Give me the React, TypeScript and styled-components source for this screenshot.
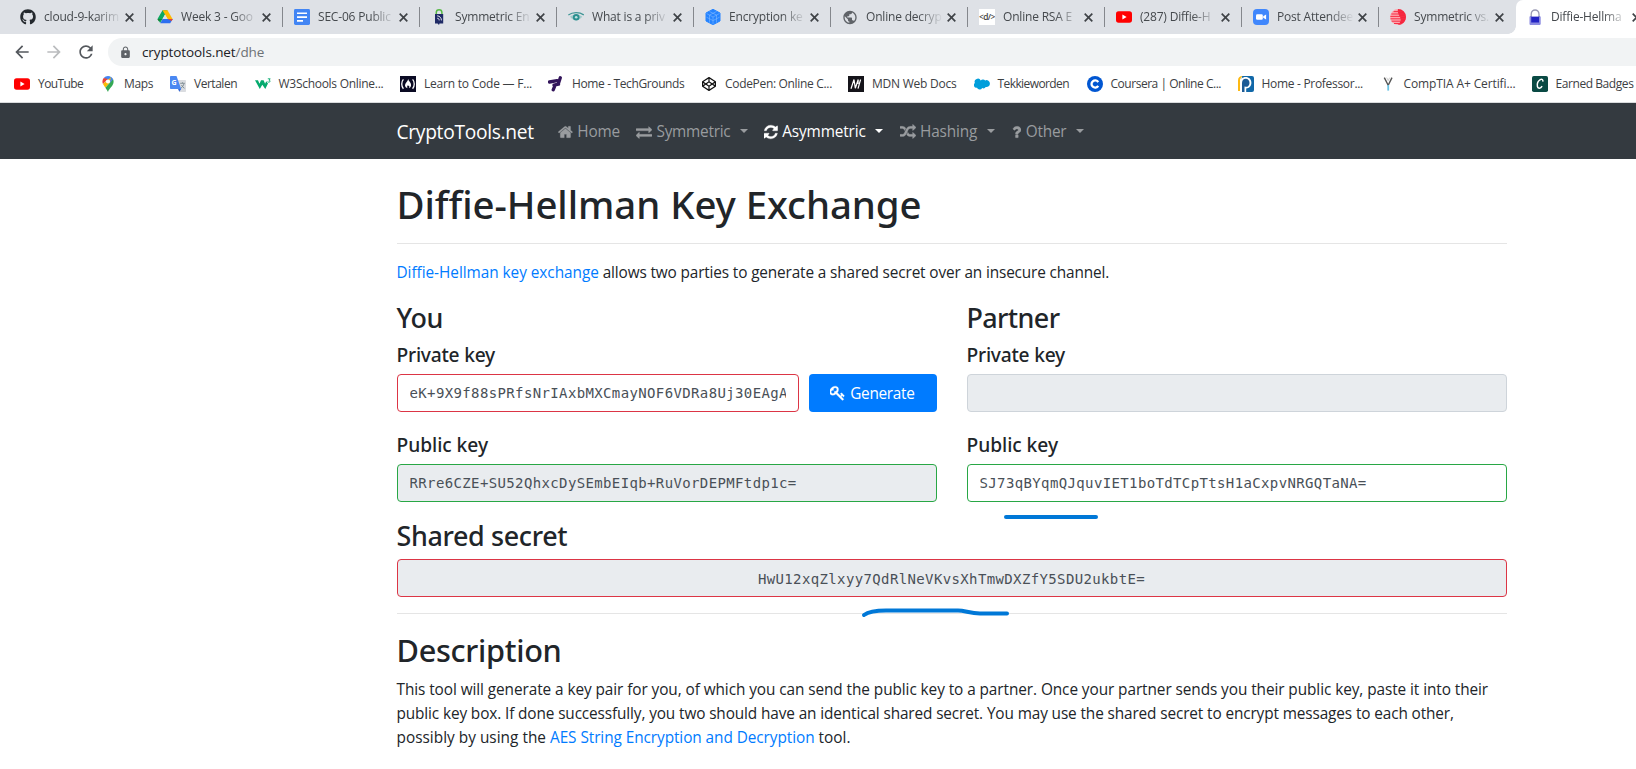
import React from "react";
import styled, { createGlobalStyle } from "styled-components";
import { FaGithub, FaCodepen } from "react-icons/fa";
import { MdArrowBack, MdArrowForward, MdRefresh, MdLock, MdPublic } from "react-icons/md";

const sans = `"Open Sans", "Noto Sans", sans-serif`;
const heading = `"Noto Sans", "Open Sans", sans-serif`;

const GlobalStyle = createGlobalStyle`
  * { box-sizing: border-box; }
  html, body { margin: 0; padding: 0; background: #fff; overflow: hidden; }
  body { font-family: ${sans}; color: #212529; }
`;

/* ---------- browser chrome ---------- */

const Window = styled.div`
  width: 100vw;
  height: 100vh;
  overflow: hidden;
  background: #fff;
`;

const TabStrip = styled.div`
  display: flex;
  height: 34px;
  padding-left: 9px;
  background: #dee1e6;
  overflow: hidden;
`;

const Tab = styled.div<{ $active?: boolean; $last?: boolean }>`
  position: relative;
  flex: none;
  display: flex;
  align-items: center;
  width: 137px;
  height: 34px;
  padding-left: 11px;
  background: ${(p) => (p.$active ? "#fff" : "transparent")};
  border-top-left-radius: ${(p) => (p.$active ? "7px" : "0")};

  &::after {
    content: "";
    display: ${(p) => (p.$active || p.$last ? "none" : "block")};
    position: absolute;
    right: 0;
    top: 7px;
    width: 1px;
    height: 20px;
    background: #84878c;
  }
  &::before {
    content: "";
    display: ${(p) => (p.$active ? "block" : "none")};
    position: absolute;
    left: -8px;
    bottom: 0;
    width: 8px;
    height: 8px;
    background: radial-gradient(circle at 0 0, transparent 7.5px, #fff 8px);
  }
`;

const Favicon = styled.span`
  flex: none;
  display: flex;
  align-items: center;
  justify-content: center;
  width: 16px;
  height: 16px;
  svg { display: block; }
`;

const TabTitle = styled.span`
  width: 78px;
  margin-left: 8px;
  white-space: nowrap;
  font-size: 12px;
  line-height: 16px;
  letter-spacing: -0.19px;
  color: #45494d;
  mask-image: linear-gradient(to right, #000 52px, transparent 77px);
`;

const TabClose = styled.svg`
  flex: none;
  margin-left: 3px;
`;

const Toolbar = styled.div`
  display: flex;
  align-items: center;
  height: 36px;
  padding-left: 12px;
  color: #5f6368;
`;

const ToolButton = styled.span<{ $dim?: boolean }>`
  flex: none;
  width: 20px;
  height: 20px;
  margin-right: 12px;
  color: ${(p) => (p.$dim ? "#babcbe" : "#54585d")};
  svg { display: block; }
`;

const Omnibox = styled.div`
  flex: 1;
  display: flex;
  align-items: center;
  height: 28px;
  padding-left: 11px;
  border-radius: 14px 0 0 14px;
  background: #f1f3f4;
`;

const Url = styled.span`
  margin-left: 10px;
  font-size: 13.5px;
  line-height: 20px;
  letter-spacing: -0.1px;
  color: #202124;
  span { color: #6d7175; }
`;

const Bookmarks = styled.div`
  display: flex;
  align-items: center;
  height: 33px;
  padding: 0 0 4px 14px;
  border-bottom: 1px solid #d9dbdd;
  overflow: hidden;
`;

const Bookmark = styled.span<{ $w: number }>`
  flex: none;
  display: flex;
  align-items: center;
  gap: 8px;
  width: ${(p) => p.$w}px;
`;

const BookmarkLabel = styled.span<{ $ls: number }>`
  font-size: 12px;
  line-height: 16px;
  white-space: nowrap;
  color: #3c4043;
  letter-spacing: ${(p) => p.$ls}px;
`;

/* ---------- site ---------- */

const Navbar = styled.nav`
  display: flex;
  align-items: center;
  height: 56px;
  padding: 2px 0 0 396.5px;
  background: #343a40;
`;

const Brand = styled.span`
  width: 161.5px;
  font-size: 19.2px;
  line-height: 30px;
  letter-spacing: -0.29px;
  color: #fff;
`;

const NavItem = styled.span<{ $w: number; $active?: boolean; $ls: number }>`
  display: flex;
  align-items: center;
  width: ${(p) => p.$w}px;
  font-size: 15.36px;
  line-height: 24px;
  letter-spacing: ${(p) => p.$ls}px;
  color: ${(p) => (p.$active ? "#fff" : "#999c9f")};
  svg { flex: none; margin-right: 4.5px; }
`;

const Caret = styled.i`
  margin: 0 0 3px 9.5px;
  border-top: 4.8px solid currentColor;
  border-left: 4.8px solid transparent;
  border-right: 4.8px solid transparent;
`;

const Main = styled.main`
  position: relative;
  width: 1110px;
  margin-left: 396.5px;
  padding-top: 21px;
`;

const H1 = styled.h1`
  margin: 0 0 -1px;
  font: 500 38.4px/48px ${heading};
  letter-spacing: -0.05px;
`;

const H2 = styled.h2`
  margin: 0 0 7px;
  padding-top: 1px;
  font: 500 30.7px/38.4px ${heading};
  letter-spacing: -0.3px;
`;

const H3 = styled.h3<{ $ls?: number }>`
  margin: 0 0 7px;
  padding-top: 1px;
  font: 500 26.9px/33.6px ${heading};
  letter-spacing: ${(p) => p.$ls ?? -0.35}px;
`;

const H5 = styled.h5<{ $ls: number }>`
  margin: 0 0 7px;
  padding-top: 1px;
  font: 500 19.2px/24px ${heading};
  letter-spacing: ${(p) => p.$ls}px;
`;

const Rule = styled.hr`
  margin: 16px 0;
  border: 0;
  border-top: 1px solid rgba(0, 0, 0, 0.1);
`;

const Paragraph = styled.p`
  margin: 0 0 15px;
  padding-top: 1px;
  font-size: 15.36px;
  line-height: 24px;
`;

const Line = styled.span<{ $ls: number }>`
  display: block;
  white-space: nowrap;
  letter-spacing: ${(p) => p.$ls}px;
`;

const Link = styled.a<{ $ls?: number }>`
  color: #007bff;
  letter-spacing: ${(p) => p.$ls ?? -0.04}px;
`;

const Columns = styled.div`
  display: grid;
  grid-template-columns: 540px 540px;
  column-gap: 30px;
`;

const Group = styled.div<{ $gap: number }>`
  margin-bottom: ${(p) => p.$gap}px;
`;

const InputRow = styled.div`
  display: flex;
  gap: 10px;
`;

const borders = { invalid: "#dc3545", valid: "#28a745", plain: "#ced4da" };

const Input = styled.input<{ $state: keyof typeof borders; $center?: boolean }>`
  display: block;
  flex: 1;
  width: 100%;
  min-width: 0;
  height: 38px;
  padding: ${(p) => (p.$center ? "7px 12px 5px" : "6px 12px")};
  border: 1px solid ${(p) => borders[p.$state]};
  border-radius: 4px;
  background: ${(p) => (p.readOnly ? "#e9ecef" : "#fff")};
  color: #495057;
  font: 14px/24px "DejaVu Sans Mono", monospace;
  letter-spacing: 0.37px;
  text-align: ${(p) => (p.$center ? "center" : "left")};
  outline: none;
`;

const Button = styled.button`
  display: flex;
  align-items: center;
  justify-content: center;
  width: 128px;
  height: 38px;
  padding: 2px 0 0;
  border: 0;
  border-radius: 4px;
  background: #007bff;
  color: #fff;
  font: 400 15.36px/24px ${sans};
  letter-spacing: -0.3px;
  svg { margin: 0 5px 2px 0; }
`;

const PenStroke = styled.svg<{ $x: number; $y: number }>`
  position: absolute;
  left: ${(p) => p.$x}px;
  top: ${(p) => p.$y}px;
  overflow: visible;
  fill: none;
  stroke: #0078d7;
  stroke-width: 4;
  stroke-linecap: round;
  stroke-linejoin: round;
`;

/* ---------- icons ---------- */

const glyphs = {
  home: ["0 0 1664 1792", "M1408 992v480q0 26-19 45t-45 19h-384v-384h-256v384h-384q-26 0-45-19t-19-45v-480q0-1 .5-3t.5-3l575-474 575 474q1 2 1 6zm223-69l-62 74q-8 9-21 11h-3q-13 0-21-7l-692-577-692 577q-12 8-24 7-13-2-21-11l-62-74q-8-10-7-23.5t11-21.5l719-599q32-26 76-26t76 26l244 204v-195q0-14 9-23t23-9h192q14 0 23 9t9 23v408l219 182q10 8 11 21.5t-7 23.5z"],
  exchange: ["0 0 1792 1792", "M1792 1184v192q0 13-9.5 22.5t-22.5 9.5h-1376v192q0 13-9.5 22.5t-22.5 9.5q-12 0-24-10l-319-320q-9-9-9-22 0-14 9-23l320-320q9-9 23-9 13 0 22.5 9.5t9.5 22.5v192h1376q13 0 22.5 9.5t9.5 22.5zm0-544q0 14-9 23l-320 320q-9 9-23 9-13 0-22.5-9.5t-9.5-22.5v-192h-1376q-13 0-22.5-9.5t-9.5-22.5v-192q0-13 9.5-22.5t22.5-9.5h1376v-192q0-14 9-23t23-9q12 0 24 10l319 319q9 9 9 23z"],
  refresh: ["128 0 1536 1792", "M1639 1056q0 5-1 7-64 268-268 434.5t-478 166.5q-146 0-282.5-55t-243.5-157l-129 129q-19 19-45 19t-45-19-19-45v-448q0-26 19-45t45-19h448q26 0 45 19t19 45-19 45l-137 137q71 66 161 102t187 36q134 0 250-65t186-179q11-17 53-117 8-23 30-23h192q13 0 22.5 9.5t9.5 22.5zm25-800v448q0 26-19 45t-45 19h-448q-26 0-45-19t-19-45 19-45l138-138q-148-137-349-137-134 0-250 65t-186 179q-11 17-53 117-8 23-30 23h-199q-13 0-22.5-9.5t-9.5-22.5v-7q65-268 270-434.5t480-166.5q146 0 284 55.5t245 156.5l130-129q19-19 45-19t45 19 19 45z"],
  random: ["0 0 1792 1792", "M666 481q-60 92-137 273-22-45-37-72.5t-40.5-63.5-51-56.5-63-35-81.5-14.5h-224q-14 0-23-9t-9-23v-192q0-14 9-23t23-9h224q250 0 410 225zm1126 799q0 14-9 23l-320 320q-9 9-23 9-13 0-22.5-9.5t-9.5-22.5v-192q-32 0-85 .5t-81 1-73-1-71-5-64-10.5-63-18.5-58-28.5-59-40-55-53.5-56-69.5q59-93 136-273 22 45 37 72.5t40.5 63.5 51 56.5 63 35 81.5 14.5h256v-192q0-14 9-23t23-9q12 0 24 10l319 319q9 9 9 23zm0-896q0 14-9 23l-320 320q-9 9-23 9-13 0-22.5-9.5t-9.5-22.5v-192h-256q-48 0-87 15t-69 45-51 61.5-45 77.5q-32 62-78 171-29 66-49.5 111t-54 105-64 100-74 83-90 68.5-106.5 42-128 16.5h-224q-14 0-23-9t-9-23v-192q0-14 9-23t23-9h224q48 0 87-15t69-45 51-61.5 45-77.5q32-62 78-171 29-66 49.5-111t54-105 64-100 74-83 90-68.5 106.5-42 128-16.5h256v-192q0-14 9-23t23-9q12 0 24 10l319 319q9 9 9 23z"],
  question: ["386 0 1024 1792", "M1088 1256v240q0 16-12 28t-28 12h-240q-16 0-28-12t-12-28v-240q0-16 12-28t28-12h240q16 0 28 12t12 28zm316-600q0 54-15.5 101t-35 76.5-55 59.5-57.5 43.5-61 35.5q-41 23-68.5 65t-27.5 67q0 17-12 32.5t-28 15.5h-240q-15 0-25.5-18.5t-10.5-37.5v-45q0-83 65-156.5t143-108.5q59-27 84-56t25-76q0-42-46.5-74t-107.5-32q-65 0-108 29-35 25-107 115-13 16-31 16-12 0-25-8l-164-125q-13-10-15.5-25t5.5-28q160-266 464-266 80 0 161 31t146 83 106 127.5 41 158.5z"],
  key: ["64 0 1664 1792", "M832 512q0-80-56-136t-136-56-136 56-56 136q0 42 19 83-41-19-83-19-80 0-136 56t-56 136 56 136 136 56 136-56 56-136q0-42-19-83 41 19 83 19 80 0 136-56t56-136zm851 704q0 17-49 66t-66 49q-9 0-28.5-16t-36.5-33-38.5-40-24.5-26l-96 96 220 220q28 28 28 68 0 42-39 81t-81 39q-40 0-68-28l-671-671q-176 131-365 131-163 0-265.5-102.5t-102.5-265.5q0-160 95-313t248-248 313-95q163 0 265.5 102.5t102.5 265.5q0 189-131 365l355 355 96-96q-3-3-26-24.5t-40-38.5-33-36.5-16-28.5q0-17 49-66t66-49q13 0 23 10 6 6 46 44.5t82 79.5 86.5 86 73 78 28.5 41z"],
} as const;

const Glyph = ({ name }: { name: keyof typeof glyphs }) => {
  const [box, d] = glyphs[name];
  const width = (Number(box.split(" ")[2]) / 1792) * 16;
  return (
    <svg width={width} height="16" viewBox={box} fill="currentColor" stroke="currentColor" strokeWidth="30">
      <path d={d} />
    </svg>
  );
};

const Svg16 = ({ children }: { children: React.ReactNode }) => (
  <svg width="16" height="16" viewBox="0 0 16 16">{children}</svg>
);

const YouTubeIcon = () => (
  <Svg16>
    <rect y="2.3" width="16" height="11.4" rx="2.6" fill="#f00" />
    <path d="M6.4 5.6v4.8L10.6 8z" fill="#fff" />
  </Svg16>
);

const DriveIcon = () => (
  <Svg16>
    <path d="M5.5 1.3h5L8 5.6 3.2 14 .5 9.9z" fill="#0da960" />
    <path d="M5.5 1.3h5l5.2 9h-5z" fill="#ffba00" />
    <path d="M3.2 14.3l2.5-4.4h10.1l-2.6 4.4z" fill="#2d6ff0" />
    <path d="M8 5.6l2.6 4.3H5.6z" fill="#dee1e6" />
    <path d="M10.6 9.9h5.2l-1.3 2.2z" fill="#e94235" />
    <path d="M5.7 9.9H.4l1.4 2.3z" fill="#188038" />
  </Svg16>
);

const DocsIcon = () => (
  <Svg16>
    <rect width="16" height="16" rx="1.4" fill="#4285f4" />
    <path d="M3 3.5h10v1.6H3zM3 7.3h10v1.6H3zM3 11.1h6v1.6H3z" fill="#fff" />
  </Svg16>
);

const TagLockIcon = () => (
  <Svg16>
    <path d="M5.3 5V3.4a2.8 2.6 0 0 1 5.6 0V5" fill="none" stroke="#58b947" strokeWidth="1.5" />
    <path d="M4 5h8.2v9.4H8.5L8 16l-1.4-1.6H4z" fill="#1f2a66" />
    <path d="M6.2 6.8c2.600.3 4.200 2 4.200 4.600M6.2 9.200c1.300 0 2 .9 2 2.200" fill="none" stroke="#fff" strokeWidth=".9" />
  </Svg16>
);

const EyeIcon = () => (
  <Svg16>
    <path d="M.3 6C4.6 2.7 11.6 2.7 15.8 6" fill="none" stroke="#3f9696" strokeWidth="1.3" />
    <path d="M2 7.8c3.4-2.6 8.8-2.6 12.2 0-3.4 4.6-8.8 4.6-12.2 0z" fill="#9fcaca" />
    <circle cx="8.2" cy="8.2" r="3.3" fill="#2a8f8f" />
    <circle cx="8.2" cy="8.2" r="1.3" fill="#bfe0e0" />
  </Svg16>
);

const CubeIcon = () => (
  <Svg16>
    <path d="M8 .3l7 3.700v8L8 15.700 1 12V4z" fill="#2684ff" stroke="#2684ff" strokeLinejoin="round" />
    <path d="M1.5 4.5L8 8l6.5-3.5M8 8v7.5M4.5 2.5L11.5 6v7.5M11.5 2.500L4.500 6v7.500M1.500 8.200L8 11.600l6.500-3.400" fill="none" stroke="#8fc0ff" strokeWidth=".5" />
  </Svg16>
);

const CodeTagIcon = () => (
  <Svg16>
    <rect width="16" height="16" fill="#fff" />
    <text x="7.8" y="10.8" textAnchor="middle" fontFamily="Open Sans, sans-serif" fontSize="8.4" fontWeight="600" letterSpacing="-.6" fill="#444">&lt;d/&gt;</text>
  </Svg16>
);

const ZoomIcon = () => (
  <Svg16>
    <rect width="16" height="16" rx="4" fill="#4087fc" />
    <rect x="3" y="5.2" width="6.8" height="5.6" rx="1.3" fill="#fff" />
    <path d="M10.2 7.300l2.900-1.900v5.200l-2.900-1.900z" fill="#fff" />
  </Svg16>
);

const SphereIcon = () => (
  <Svg16>
    <circle cx="8" cy="8" r="7.9" fill="#fca5ad" />
    <path d="M8 0a8 8 0 0 1 0 16c3-3 3.400-5.500 2-8C8.800 5.600 7 3 8 0z" fill="#f5253d" />
    <path d="M3.600 2.600h8.800M1.400 5h13.200M.4 7.400h15.200M.5 9.800h15M1.600 12.200h12.800M4 14.500h8" stroke="#f72f46" strokeWidth="1" />
  </Svg16>
);

const BluePadlockIcon = () => (
  <Svg16>
    <path d="M4.200 8V5.200c0-5.600 7.800-5.600 7.800 0V8" fill="none" stroke="#9a9ab4" strokeWidth="1.300" />
    <path d="M2.800 7.600h10.500v7.600H2.800z" fill="#2424c4" />
    <path d="M2.800 7.600h1.400V16H2.800zM12 7.600h1.300V16H12zM2.800 13.600h10.500V16H2.800z" fill="#8a8ae0" />
  </Svg16>
);

const MapsIcon = () => (
  <Svg16>
    <path d="M8 0a5.600 5.600 0 0 0-4.300 2L8 5.600l3.300-4.400A5.600 5.600 0 0 0 8 0z" fill="#4285f4" />
    <path d="M3.700 2a5.500 5.500 0 0 0-1.300 3.600c0 1 .2 1.800.6 2.500L8 3z" fill="#ea4335" />
    <path d="M3 8.100c.6 1.300 1.500 2.300 2.400 3.600L13 3.200l-2-2z" fill="#fbbc04" />
    <path d="M5.400 11.700C6.600 13.300 7.300 14.600 8 16c1-3.600 5.600-5.700 5.600-10.400 0-1-.2-1.800-.6-2.600z" fill="#34a853" />
    <path d="M11 .9c1 .6 1.700 1.400 2.100 2.400L9.700 7z" fill="#4285f4" />
    <circle cx="8" cy="5.500" r="2.100" fill="#fff" />
  </Svg16>
);

const TranslateIcon = () => (
  <Svg16>
    <path d="M6 4h9.200c.5 0 .8.300.8.800v10.400c0 .5-.3.800-.8.800H9.500z" fill="#dadce0" />
    <path d="M.8 0h5.700l4.700 13H.8C.3 13 0 12.700 0 12.200V.8C0 .3.300 0 .8 0z" fill="#4a88f2" />
    <path d="M8 13h3.200l-1.900 2.800z" fill="#3367d6" />
    <text x="1.500" y="8.800" fontFamily="Open Sans, sans-serif" fontSize="7" fontWeight="700" fill="#fff">G</text>
    <path d="M10.200 7.300h4.600M12.500 6.300v1M14 7.500c-.4 2-1.600 3.600-3 4.600M11.500 9c.6 1.500 1.700 2.500 3 3.300" fill="none" stroke="#7b8a91" strokeWidth=".9" />
  </Svg16>
);

const W3Icon = () => (
  <Svg16>
    <path d="M0 4.300h3l1.500 3.500L6 4.300h2.600l1.500 3.500 1.100-2.500L13 7.500 10.300 13 7.300 8.800 4.800 13z" fill="#04aa6d" />
    <path d="M12.800 2.800h2.400L14 4.200c1.500 0 1.500 2-.1 2-.7 0-1.100-.3-1.300-.6" fill="none" stroke="#04aa6d" strokeWidth=".9" />
  </Svg16>
);

const FreeCodeCampIcon = () => (
  <Svg16>
    <rect width="16" height="16" fill="#0a0a23" />
    <path d="M3.400 3.400c-2.200 2.400-2.200 7 0 9.400M12.600 3.400c2.200 2.400 2.200 7 0 9.400" fill="none" stroke="#fff" strokeWidth="1.300" />
    <path d="M8.200 3c.2 2 2.900 3.400 2.900 6 0 1.600-.9 2.800-2.200 3.300.5-.9.700-1.700.1-2.600-.5.500-.8.300-.9-.6-.9.9-1.300 2.200-.5 3.200C6.100 11.800 5 10.700 5 9.200 5 7 7.800 5.600 8.200 3z" fill="#fff" />
  </Svg16>
);

const TechGroundsIcon = () => (
  <Svg16>
    <path d="M1.500 6l7.500-1.300M6 9.200l4.500-1M12.300 1.800L10.600 7M7 9.400L5.200 13.800" fill="none" stroke="#32145a" strokeWidth="3.300" strokeLinecap="round" />
  </Svg16>
);

const MdnIcon = () => (
  <Svg16>
    <rect width="16" height="16" fill="#15141a" />
    <path d="M3 12.700L6 3.500 7.300 12.200 10.200 3.500M10 12.700l2.600-9.200M10.200 3.500L10 8" fill="none" stroke="#fff" strokeWidth="1.200" />
  </Svg16>
);

const CloudIcon = () => (
  <Svg16>
    <path d="M6.700 3.800a3 3 0 0 1 4.500-.2 3.400 3.400 0 0 1 4.700 3.200 3.400 3.400 0 0 1-4.200 3.400 2.600 2.600 0 0 1-3.500 1 2.900 2.900 0 0 1-5.200-.2A2.700 2.700 0 0 1 .9 6.200a3 3 0 0 1 5.800-2.400z" transform="translate(0 .8)" fill="#009edb" />
  </Svg16>
);

const CourseraIcon = () => (
  <Svg16>
    <circle cx="8" cy="8" r="8" fill="#0056d2" />
    <path d="M11.200 6.100a3.600 3.600 0 1 0 0 3.800" fill="none" stroke="#fff" strokeWidth="2.300" />
  </Svg16>
);

const ProfessorIcon = () => (
  <Svg16>
    <path d="M4 0h10a2 2 0 0 1 2 2v12a2 2 0 0 1-2 2H2z" fill="#1168a8" />
    <path d="M4.500 0C1.500 0 0 1.500 0 4.500V15h2V5c0-2 .8-3.300 2.500-5z" fill="#fdb913" />
    <path d="M2 16V7c0-4 2.500-6 5.700-6C11 1 13.400 3.400 13.400 6.800c0 3.200-2.200 5.600-5.200 5.600V16z" fill="#fff" />
    <path d="M4 16V7c0-2.700 1.600-4.200 3.800-4.200S11.500 4.500 11.500 6.900 10 10.800 8 10.800l-1.500-.3V16z" fill="#1c5b96" />
  </Svg16>
);

const CompTiaIcon = () => (
  <Svg16>
    <path d="M4.300 1.600L8.200 9.200 12 1.600" fill="none" stroke="#555" strokeWidth="1.400" />
    <path d="M6.700 1.600l1.500 3 1.500-3" fill="none" stroke="#bbb" strokeWidth=".7" />
    <path d="M8.200 9v5.600" stroke="#6cc3e4" strokeWidth="1.800" />
  </Svg16>
);

const BadgeIcon = () => (
  <Svg16>
    <rect width="16" height="16" rx="1.800" fill="#0a4a44" />
    <path d="M10.800 5.600c.5-2-.9-2.900-2.500-2-2.200 1.300-3.300 4.400-2.900 6.800.4 2.600 3.300 2.200 4.700-.3" fill="none" stroke="#fff" strokeWidth="1.500" />
  </Svg16>
);

/* ---------- data ---------- */

const tabs: { title: string; icon: React.ReactNode }[] = [
  { title: "cloud-9-karim", icon: <FaGithub size={16} color="#24292e" /> },
  { title: "Week 3 - Goo", icon: <DriveIcon /> },
  { title: "SEC-06 Public", icon: <DocsIcon /> },
  { title: "Symmetric En", icon: <TagLockIcon /> },
  { title: "What is a priv", icon: <EyeIcon /> },
  { title: "Encryption ke", icon: <CubeIcon /> },
  { title: "Online decryp", icon: <MdPublic size={17} color="#5f6368" /> },
  { title: "Online RSA E", icon: <CodeTagIcon /> },
  { title: "(287) Diffie-H", icon: <YouTubeIcon /> },
  { title: "Post Attendee", icon: <ZoomIcon /> },
  { title: "Symmetric vs.", icon: <SphereIcon /> },
  { title: "Diffie-Hellma", icon: <BluePadlockIcon /> },
];

const bookmarks: { label: string; icon: React.ReactNode; w: number; ls: number }[] = [
  { label: "YouTube", icon: <YouTubeIcon />, w: 86, ls: -0.58 },
  { label: "Maps", icon: <MapsIcon />, w: 70, ls: -0.38 },
  { label: "Vertalen", icon: <TranslateIcon />, w: 84.5, ls: -0.48 },
  { label: "W3Schools Online...", icon: <W3Icon />, w: 145.5, ls: -0.28 },
  { label: "Learn to Code — F...", icon: <FreeCodeCampIcon />, w: 148, ls: -0.22 },
  { label: "Home - TechGrounds", icon: <TechGroundsIcon />, w: 153, ls: -0.37 },
  { label: "CodePen: Online C...", icon: <FaCodepen size={14} color="#111" />, w: 147, ls: -0.32 },
  { label: "MDN Web Docs", icon: <MdnIcon />, w: 125.5, ls: -0.24 },
  { label: "Tekkieworden", icon: <CloudIcon />, w: 113, ls: -0.59 },
  { label: "Coursera | Online C...", icon: <CourseraIcon />, w: 151, ls: -0.47 },
  { label: "Home - Professor...", icon: <ProfessorIcon />, w: 142, ls: -0.3 },
  { label: "CompTIA A+ Certifi...", icon: <CompTiaIcon />, w: 152, ls: -0.12 },
  { label: "Earned Badges", icon: <BadgeIcon />, w: 120, ls: -0.43 },
];

const navItems: { label: string; icon: keyof typeof glyphs; w: number; ls: number; menu?: boolean; active?: boolean }[] = [
  { label: "Home", icon: "home", w: 78, ls: -0.25 },
  { label: "Symmetric", icon: "exchange", w: 128, ls: -0.25, menu: true },
  { label: "Asymmetric", icon: "refresh", w: 135.5, ls: -0.13, menu: true, active: true },
  { label: "Hashing", icon: "random", w: 112.5, ls: -0.13, menu: true },
  { label: "Other", icon: "question", w: 90, ls: -0.2, menu: true },
];

export default function App() {
  return (
    <Window>
      <GlobalStyle />
      <TabStrip>
        {tabs.map((t, i) => (
          <Tab key={t.title} $active={i === 11} $last={i === 10}>
            <Favicon>{t.icon}</Favicon>
            <TabTitle>{t.title}</TabTitle>
            <TabClose width="9" height="9" viewBox="0 0 9 9" stroke="#3f4347" strokeWidth="1.7">
              <path d="M.7.7l7.600 7.600M8.300.7L.7 8.300" />
            </TabClose>
          </Tab>
        ))}
      </TabStrip>
      <Toolbar>
        <ToolButton><MdArrowBack size={20} /></ToolButton>
        <ToolButton $dim><MdArrowForward size={20} /></ToolButton>
        <ToolButton><MdRefresh size={20} /></ToolButton>
        <Omnibox>
          <MdLock size={13} />
          <Url>cryptotools.net<span>/dhe</span></Url>
        </Omnibox>
      </Toolbar>
      <Bookmarks>
        {bookmarks.map((b) => (
          <Bookmark key={b.label} $w={b.w}>
            <Favicon>{b.icon}</Favicon>
            <BookmarkLabel $ls={b.ls}>{b.label}</BookmarkLabel>
          </Bookmark>
        ))}
      </Bookmarks>
      <Navbar>
        <Brand>CryptoTools.net</Brand>
        {navItems.map((n) => (
          <NavItem key={n.label} $w={n.w} $ls={n.ls} $active={n.active}>
            <Glyph name={n.icon} />
            {n.label}
            {n.menu && <Caret />}
          </NavItem>
        ))}
      </Navbar>
      <Main>
        <H1>Diffie-Hellman Key Exchange</H1>
        <Rule />
        <Paragraph>
          <Line $ls={-0.14}>
            <Link>Diffie-Hellman key exchange</Link> allows two parties to generate a shared secret over an insecure channel.
          </Line>
        </Paragraph>
        <Columns>
          <section>
            <H3>You</H3>
            <Group $gap={20}>
              <H5 $ls={-0.22}>Private key</H5>
              <InputRow>
                <Input $state="invalid" defaultValue="eK+9X9f88sPRfsNrIAxbMXCmayNOF6VDRa8Uj30EAgA" />
                <Button><Glyph name="key" />Generate</Button>
              </InputRow>
            </Group>
            <Group $gap={16}>
              <H5 $ls={-0.04}>Public key</H5>
              <Input $state="valid" readOnly value="RRre6CZE+SU52QhxcDySEmbEIqb+RuVorDEPMFtdp1c=" />
            </Group>
          </section>
          <section>
            <H3 $ls={-0.6}>Partner</H3>
            <Group $gap={20}>
              <H5 $ls={-0.22}>Private key</H5>
              <Input $state="plain" readOnly value="" />
            </Group>
            <Group $gap={16}>
              <H5 $ls={-0.04}>Public key</H5>
              <Input $state="valid" defaultValue="SJ73qBYqmQJquvIET1boTdTCpTtsH1aCxpvNRGQTaNA=" />
            </Group>
          </section>
        </Columns>
        <H3>Shared secret</H3>
        <Input $state="invalid" $center readOnly value="HwU12xqZlxyy7QdRlNeVKvsXhTmwDXZfY5SDU2ukbtE=" />
        <Rule />
        <H2>Description</H2>
        <Paragraph>
          <Line $ls={-0.075}>This tool will generate a key pair for you, of which you can send the public key to a partner. Once your partner sends you their public key, paste it into their</Line>
          <Line $ls={-0.12}>public key box. If done successfully, you two should have an identical shared secret. You may use the shared secret to encrypt messages to each other,</Line>
          <Line $ls={0.02}>possibly by using the <Link $ls={-0.07}>AES String Encryption and Decryption</Link> tool.</Line>
        </Paragraph>
        <PenStroke $x={608} $y={358} width="93" height="1">
          <path d="M1 0H91" />
        </PenStroke>
        <PenStroke $x={467} $y={451} width="145" height="6">
          <path d="M0 5C4 2 12 .500 22 .500H94C101 .500 106 3.500 116 3.500H143" />
        </PenStroke>
      </Main>
    </Window>
  );
}
